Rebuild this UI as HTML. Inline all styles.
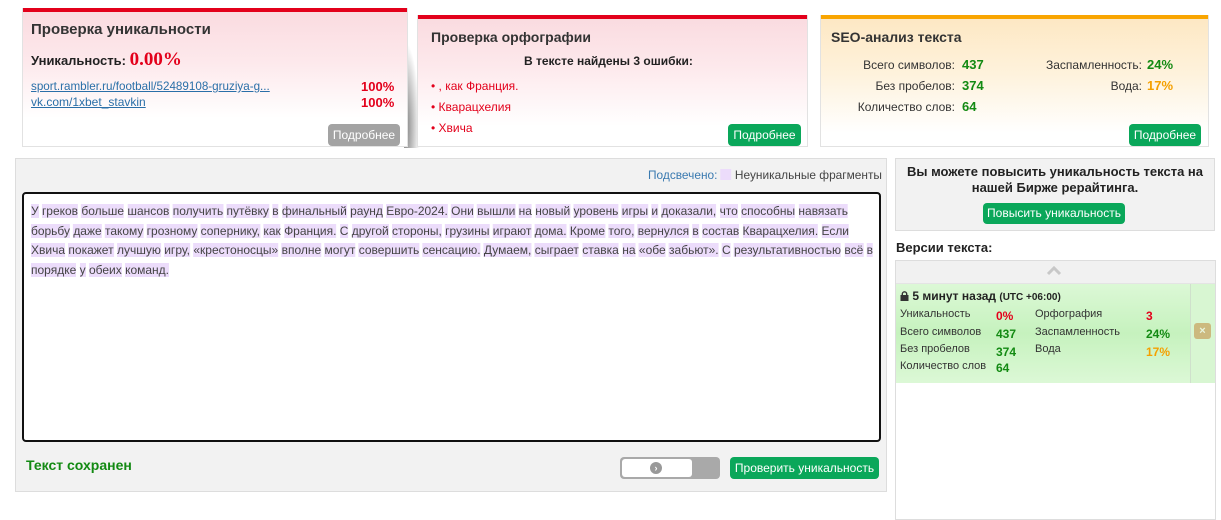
<!DOCTYPE html>
<html><head><meta charset="utf-8"><style>
*{box-sizing:border-box;margin:0;padding:0}
body{width:1221px;height:512px;background:#fff;font-family:"Liberation Sans",sans-serif;position:relative;overflow:hidden;color:#333}
.a{position:absolute;white-space:nowrap}
.fit{display:inline-block;transform-origin:0 50%}
.card{position:absolute;border:1px solid #e2e2e2;border-top:none}
.btn{position:absolute;color:#fff;font-size:12px;border-radius:4px;text-align:center}
.g{color:#138a13;font-weight:bold}
.r{color:#e3001b}
.o{color:#f5a000;font-weight:bold}
.w{background:#ecdcfb}
</style></head><body>

<!-- card 1 -->
<div class="a" style="left:404px;top:40px;width:16px;height:108px;background:radial-gradient(ellipse at 0% 80%,rgba(0,0,0,.55),rgba(0,0,0,0) 70%)"></div>
<div class="card" style="left:22px;top:8px;width:386px;height:139px;background:linear-gradient(#fadadf 0%,#fde9ec 40%,#fff 80%)">
 <div style="height:4px;background:#e3001b"></div>
</div>
<div class="a" style="left:31px;top:21px;font-size:15px;font-weight:bold;color:#333">Проверка уникальности</div>
<div class="a" style="left:31px;top:49px;font-size:13px;font-weight:bold;color:#222">Уникальность: <span style="font-family:'Liberation Serif',serif;font-size:19px;color:#e3001b">0.00%</span></div>
<div class="a" style="left:31px;top:79px;font-size:12px;color:#2a6fa8"><span style="display:inline-block;transform:scaleX(0.97);transform-origin:0 50%;text-decoration:underline">sport.rambler.ru/football/52489108-gruziya-g...</span></div>
<div class="a" style="left:31px;top:95px;font-size:12px;color:#2a6fa8;text-decoration:underline">vk.com/1xbet_stavkin</div>
<div class="a r" style="left:361px;top:79px;font-size:13px;font-weight:bold">100%</div>
<div class="a r" style="left:361px;top:95px;font-size:13px;font-weight:bold">100%</div>
<div class="btn" style="left:328px;top:124px;width:72px;height:22px;line-height:22px;background:#a3a3a3">Подробнее</div>

<!-- card 2 -->
<div class="card" style="left:417px;top:15px;width:391px;height:132px;background:linear-gradient(#fadadf 0%,#fde9ec 40%,#fff 85%)">
 <div style="height:4px;background:#e3001b"></div>
</div>
<div class="a" style="left:431px;top:29px;font-size:14px;font-weight:bold;color:#333">Проверка орфографии</div>
<div class="a" style="left:524px;top:54px;font-size:12px;font-weight:bold;color:#222">В тексте найдены 3 ошибки:</div>
<div class="a r" style="left:431px;top:79px;font-size:12px">• , как Франция.</div>
<div class="a r" style="left:431px;top:100px;font-size:12px">• Кварацхелия</div>
<div class="a r" style="left:431px;top:121px;font-size:12px">• Хвича</div>
<div class="btn" style="left:728px;top:124px;width:73px;height:22px;line-height:22px;background:#0aa75a">Подробнее</div>

<!-- card 3 -->
<div class="card" style="left:820px;top:15px;width:389px;height:132px;background:linear-gradient(#fde7c2 0%,#fef2dc 45%,#fff 90%)">
 <div style="height:4px;background:#f9a500"></div>
</div>
<div class="a" style="left:831px;top:29px;font-size:14px;font-weight:bold;color:#333">SEO-анализ текста</div>
<div class="a" style="right:266px;top:58px;font-size:12px">Всего символов:</div>
<div class="a g" style="left:962px;top:57px;font-size:13px">437</div>
<div class="a" style="right:266px;top:79px;font-size:12px">Без пробелов:</div>
<div class="a g" style="left:962px;top:78px;font-size:13px">374</div>
<div class="a" style="right:266px;top:100px;font-size:12px">Количество слов:</div>
<div class="a g" style="left:962px;top:99px;font-size:13px">64</div>
<div class="a" style="right:79px;top:58px;font-size:12px">Заспамленность:</div>
<div class="a g" style="left:1147px;top:57px;font-size:13px">24%</div>
<div class="a" style="right:79px;top:79px;font-size:12px">Вода:</div>
<div class="a o" style="left:1147px;top:78px;font-size:13px">17%</div>
<div class="btn" style="left:1129px;top:124px;width:72px;height:22px;line-height:22px;background:#0aa75a">Подробнее</div>

<!-- main panel -->
<div class="a" style="left:15px;top:158px;width:872px;height:334px;background:#f2f2f2;border:1px solid #ddd"></div>
<div class="a" style="left:648px;top:168px;font-size:12px;color:#3a7ab0"><span style="display:inline-block;transform:scaleX(0.99);transform-origin:0 50%">Подсвечено: <span style="display:inline-block;width:11px;height:11px;background:#ecdcfb;vertical-align:-1px"></span> <span style="color:#444">Неуникальные фрагменты</span></span></div>
<div class="a" style="left:22px;top:192px;width:859px;height:250px;background:#fff;border:2px solid #111;border-radius:4px"></div>
<div class="a" id="txt" style="left:31px;top:202px;font-size:12px;line-height:19.5px;color:#444">
 <div><div class="fit" style="width:817px">У греков больше шансов получить путёвку в финальный раунд Евро-2024. Они вышли на новый уровень игры и доказали, что способны навязать</div></div>
 <div><div class="fit" style="width:818px">борьбу даже такому грозному сопернику, как Франция. С другой стороны, грузины играют дома. Кроме того, вернулся в состав Кварацхелия. Если</div></div>
 <div><div class="fit" style="width:842px">Хвича покажет лучшую игру, «крестоносцы» вполне могут совершить сенсацию. Думаем, сыграет ставка на «обе забьют». С результативностью всё в</div></div>
 <div><div class="fit" style="width:138px">порядке у обеих команд.</div></div>
</div>
<div class="a" style="left:26px;top:457px;font-size:14px;font-weight:bold;color:#138a13">Текст сохранен</div>
<div class="a" style="left:620px;top:457px;width:100px;height:22px;border-radius:4px;background:#a9a9a9">
 <div style="position:absolute;left:2px;top:2px;width:70px;height:18px;background:#fff;border-radius:3px"></div>
 <div style="position:absolute;left:30px;top:5px;width:12px;height:12px;border-radius:50%;background:#999;color:#fff;font-size:9px;line-height:12px;text-align:center;font-weight:bold">›</div>
</div>
<div class="btn" style="left:730px;top:457px;width:149px;height:22px;line-height:22px;background:#0aa75a">Проверить уникальность</div>

<!-- right -->
<div class="a" style="left:895px;top:158px;width:320px;height:73px;background:#f2f2f2;border:1px solid #ddd"></div>
<div class="a" style="left:895px;top:164px;width:320px;text-align:center;font-size:13px;font-weight:bold;line-height:16px;color:#222;white-space:normal">Вы можете повысить уникальность текста на<br>нашей Бирже рерайтинга.</div>
<div class="btn" style="left:983px;top:203px;width:142px;height:21px;line-height:21px;background:#0aa75a">Повысить уникальность</div>
<div class="a" style="left:896px;top:240px;font-size:13px;font-weight:bold;color:#222">Версии текста:</div>
<div class="a" style="left:895px;top:260px;width:321px;height:260px;border:1px solid #ddd;background:#fff"></div>
<div class="a" style="left:896px;top:261px;width:319px;height:23px;background:#f1f1f1;border-bottom:1px solid #e4e4e4"></div>
<svg class="a" style="left:1046px;top:265px" width="16" height="12"><path d="M2 9 L8 3 L14 9" stroke="#c8c8c8" stroke-width="3" fill="none"/></svg>
<div class="a" style="left:896px;top:284px;width:294px;height:99px;background:linear-gradient(#dcf8d6,#c6f2be 50%,#dcf8d6)"></div>
<div class="a" style="left:1190px;top:284px;width:25px;height:99px;background:#d8f6d2;border-left:1px solid #cfe0cc"></div>
<div class="a" style="left:1194px;top:323px;width:17px;height:16px;border-radius:3px;background:#ccb97f;color:#e8f4dd;font-size:11px;text-align:center;line-height:16px;font-weight:bold">×</div>
<div class="a" style="left:900px;top:289px;font-size:12px;font-weight:bold;color:#222"><svg width="9" height="10" style="vertical-align:-1px"><rect x="0.5" y="4" width="8" height="6" fill="#333"/><path d="M2.3 4.5V3a2.2 2.2 0 0 1 4.4 0v1.5" stroke="#333" stroke-width="1.4" fill="none"/></svg> 5 минут назад <span style="font-size:10px">(UTC +06:00)</span></div>
<div class="a" style="left:900px;top:308px;font-size:11px">Уникальность</div>
<div class="a" style="left:900px;top:326px;font-size:11px">Всего символов</div>
<div class="a" style="left:900px;top:343px;font-size:11px">Без пробелов</div>
<div class="a" style="left:900px;top:360px;font-size:11px">Количество слов</div>
<div class="a r" style="left:996px;top:309px;font-size:12px;font-weight:bold">0%</div>
<div class="a g" style="left:996px;top:327px;font-size:12px">437</div>
<div class="a g" style="left:996px;top:345px;font-size:12px">374</div>
<div class="a g" style="left:996px;top:361px;font-size:12px">64</div>
<div class="a" style="left:1035px;top:308px;font-size:11px">Орфография</div>
<div class="a" style="left:1035px;top:326px;font-size:11px">Заспамленность</div>
<div class="a" style="left:1035px;top:343px;font-size:11px">Вода</div>
<div class="a r" style="left:1146px;top:309px;font-size:12px;font-weight:bold">3</div>
<div class="a g" style="left:1146px;top:327px;font-size:12px">24%</div>
<div class="a o" style="left:1146px;top:345px;font-size:12px">17%</div>

<script>
document.querySelectorAll('#txt .fit').forEach(function(el){
  var w=parseFloat(el.style.width);
  el.innerHTML=el.textContent.split(' ').map(function(t){return '<span class="w">'+t+'</span>'}).join(' ');
  el.style.width='auto';
  var cw=el.getBoundingClientRect().width;
  if(cw>0)el.style.transform='scaleX('+(w/cw)+')';
});
</script>
</body></html>
